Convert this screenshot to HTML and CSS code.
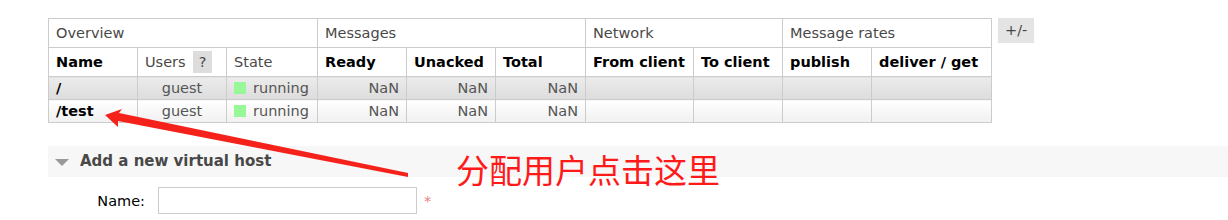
FILE: index.html
```html
<!DOCTYPE html>
<html lang="en">
<head>
<meta charset="UTF-8">
<title>Virtual Hosts</title>
<link rel="stylesheet" href="styles.css">
</head>
<body>

<div class="page">
    <div class="list">
        <table class="vhosts">
            <thead>
                <tr class="group-row">
                    <th colspan="3">Overview</th>
                    <th colspan="3">Messages</th>
                    <th colspan="2">Network</th>
                    <th colspan="2">Message rates</th>
                </tr>
                <tr class="col-row">
                    <th class="c-name">Name</th>
                    <th class="c-users plain">Users <span class="help">?</span></th>
                    <th class="c-state plain">State</th>
                    <th class="c-num">Ready</th>
                    <th class="c-num">Unacked</th>
                    <th class="c-total">Total</th>
                    <th class="c-from">From client</th>
                    <th class="c-num">To client</th>
                    <th class="c-num">publish</th>
                    <th class="c-deliver">deliver / get</th>
                </tr>
            </thead>
            <tbody>
                <tr class="alt1">
                    <td class="name">/</td>
                    <td class="center">guest</td>
                    <td><span class="state-box"></span>running</td>
                    <td class="num">NaN</td>
                    <td class="num">NaN</td>
                    <td class="num">NaN</td>
                    <td></td><td></td><td></td><td></td>
                </tr>
                <tr class="alt2">
                    <td class="name">/test</td>
                    <td class="center">guest</td>
                    <td><span class="state-box"></span>running</td>
                    <td class="num">NaN</td>
                    <td class="num">NaN</td>
                    <td class="num">NaN</td>
                    <td></td><td></td><td></td><td></td>
                </tr>
            </tbody>
        </table>
        <span class="toggle">+/-</span>
    </div>

    <div class="section">
        <h2 class="section-title"><span class="tri"></span>Add a new virtual host</h2>
        <div class="form-row">
            <label class="form-label">Name:</label>
            <input class="text-input" type="text">
            <span class="req">*</span>
        </div>
    </div>

    <!-- screenshot annotation -->
    <svg class="annotation" width="420" height="80" viewBox="0 0 420 80">
        <polygon points="105,115 122,109 119,113 408,173 408,177 118,121 118,127" transform="translate(-100,-100)" fill="#f5221c"/>
    </svg>
    <div class="note">分配用户点击这里</div>
</div>

</body>
</html>
```

FILE: styles.css
```css
body {
    margin: 0;
    padding: 0;
    background-color: #ffffff;
    font-family: "DejaVu Sans", Verdana, sans-serif;
    font-size: 14.5px;
    color: #484848;
}

.page {
    position: relative;
    padding-top: 18px;
    height: 202px;
    overflow: hidden;
}

.list {
    display: flex;
    align-items: flex-start;
    gap: 6px;
    padding-left: 48px;
}

.vhosts {
    border-collapse: collapse;
    border: 1px solid #cccccc;
    font-size: 14.5px;
}

.vhosts th,
.vhosts td {
    border: 1px solid #cccccc;
    padding: 0 7px;
    white-space: nowrap;
}

.vhosts th {
    text-align: left;
}

.group-row th {
    height: 28px;
    font-weight: normal;
    color: #484848;
}

.col-row th {
    height: 28px;
    color: #000000;
}

.col-row th.plain {
    font-weight: normal;
    color: #484848;
}

.c-name { width: 74px; }
.c-users { width: 74px; }
.c-state { width: 76px; }
.c-num { width: 74px; }
.c-total { width: 75px; }
.c-from { width: 93px; }
.c-deliver { width: 105px; }

.help {
    display: inline-block;
    background-color: #dddddd;
    width: 19px;
    height: 22px;
    line-height: 22px;
    text-align: center;
    margin-left: 3px;
}

.vhosts td {
    height: 22px;
    color: #555555;
}

.vhosts td.name {
    font-weight: bold;
    color: #000000;
}

.vhosts td.center {
    text-align: center;
}

.vhosts td.num {
    text-align: right;
}

.alt1 td {
    background: linear-gradient(#ececec, #dcdcdc);
}

.alt2 td {
    background: linear-gradient(#ffffff, #f0f0f0);
}

.state-box {
    display: inline-block;
    width: 12px;
    height: 12px;
    background-color: #98f898;
    margin-right: 7px;
    vertical-align: -1px;
}

.toggle {
    background-color: #e4e4e4;
    color: #484848;
    padding: 0 7px;
    height: 25px;
    line-height: 25px;
}

.section {
    margin-top: 23px;
    margin-left: 48px;
}

.section-title {
    margin: 0;
    height: 31px;
    line-height: 31px;
    background-color: #f7f7f7;
    font-size: 15px;
    color: #484848;
    display: flex;
    align-items: center;
}

.tri {
    width: 0;
    height: 0;
    border-left: 7px solid transparent;
    border-right: 7px solid transparent;
    border-top: 7px solid #999999;
    margin: 1px 11px 0 7px;
}

.form-row {
    display: flex;
    align-items: center;
    margin-top: 10px;
}

.form-label {
    width: 97px;
    text-align: right;
    color: #000000;
}

.text-input {
    margin-left: 13px;
    width: 257px;
    height: 25px;
    border: 1px solid #cccccc;
    padding: 0;
}

.req {
    color: #f08080;
    margin-left: 7px;
}

.annotation {
    position: absolute;
    left: 100px;
    top: 100px;
}

.note {
    position: absolute;
    left: 456px;
    top: 146px;
    font-family: "Noto Sans CJK SC", sans-serif;
    font-size: 33px;
    line-height: 46px;
    color: #ff1a1a;
}
```
